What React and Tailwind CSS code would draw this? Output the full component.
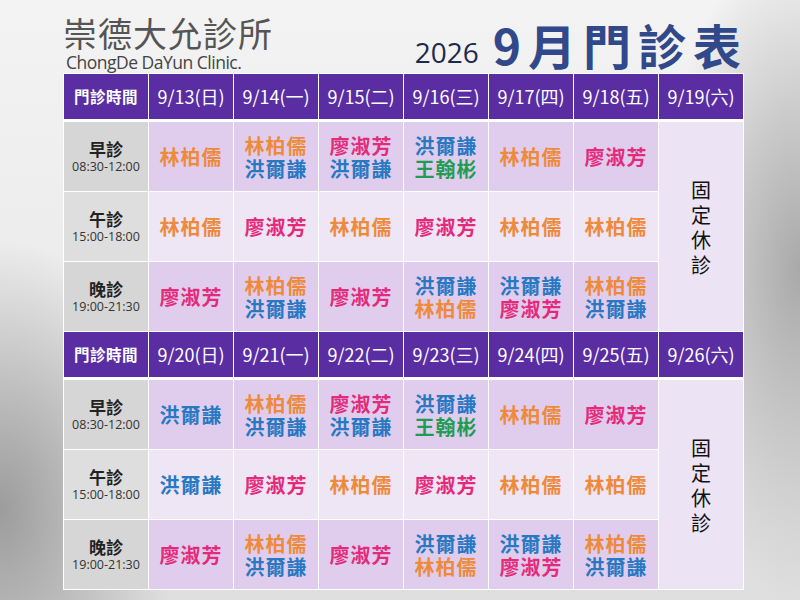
import React from 'react';

const LIN = { n: '林柏儒', c: 'text-[#ee8a3b]' };
const LIAO = { n: '廖淑芳', c: 'text-[#e42a7a]' };
const HONG = { n: '洪爾謙', c: 'text-[#2878c2]' };
const WANG = { n: '王翰彬', c: 'text-[#1f9c53]' };

const SESSIONS = [
  { name: '早診', time: '08:30-12:00' },
  { name: '午診', time: '15:00-18:00' },
  { name: '晚診', time: '19:00-21:30' },
];

const WEEKS = [
  {
    dates: ['9/13(日)', '9/14(一)', '9/15(二)', '9/16(三)', '9/17(四)', '9/18(五)', '9/19(六)'],
    rows: [
      [[LIN], [LIN, HONG], [LIAO, HONG], [HONG, WANG], [LIN], [LIAO]],
      [[LIN], [LIAO], [LIN], [LIAO], [LIN], [LIN]],
      [[LIAO], [LIN, HONG], [LIAO], [HONG, LIN], [HONG, LIAO], [LIN, HONG]],
    ],
  },
  {
    dates: ['9/20(日)', '9/21(一)', '9/22(二)', '9/23(三)', '9/24(四)', '9/25(五)', '9/26(六)'],
    rows: [
      [[HONG], [LIN, HONG], [LIAO, HONG], [HONG, WANG], [LIN], [LIAO]],
      [[HONG], [LIAO], [LIN], [LIAO], [LIN], [LIN]],
      [[LIAO], [LIN, HONG], [LIAO], [HONG, LIN], [HONG, LIAO], [LIN, HONG]],
    ],
  },
];

function HeaderRow({ dates }) {
  return (
    <div className="grid grid-cols-[repeat(8,84px)] gap-px h-[45px]">
      <div className="bg-[#5a2ea2] text-white flex items-center justify-center text-[15.5px] font-bold tracking-[0.5px]">
        門診時間
      </div>
      {dates.map((d) => (
        <div key={d} className="bg-[#5a2ea2] text-white flex items-center justify-center text-[18px]">
          {d}
        </div>
      ))}
    </div>
  );
}

function BodyRows({ rows }) {
  return (
    <div className="grid grid-cols-[repeat(8,84px)] grid-rows-[repeat(3,69px)] gap-px">
      {rows.map((row, ri) => {
        const odd = ri !== 1;
        return (
          <React.Fragment key={ri}>
            <div className={`flex flex-col items-center justify-center ${odd ? 'bg-[#d6d6d6]' : 'bg-[#dedede]'}`}>
              <div className="text-[17px] font-bold leading-[20px] text-[#222]">{SESSIONS[ri].name}</div>
              <div className="text-[12.5px] leading-[15px] text-[#333] font-['Open_Sans',sans-serif]">{SESSIONS[ri].time}</div>
            </div>
            {row.map((docs, ci) => (
              <div
                key={ci}
                className={`flex flex-col items-center justify-center text-[20px] leading-[23px] font-semibold tracking-[1px] ${odd ? 'bg-[#e0cdee]' : 'bg-[#eee5f5]'}`}
              >
                {docs.map((d) => (
                  <span key={d.n} className={d.c}>{d.n}</span>
                ))}
              </div>
            ))}
            {ri === 0 && (
              <div className="row-span-3 bg-[#ece3f4] flex flex-col items-center justify-center text-[20px] leading-[25px] text-[#111]">
                <span>固</span>
                <span>定</span>
                <span>休</span>
                <span>診</span>
              </div>
            )}
          </React.Fragment>
        );
      })}
    </div>
  );
}

export default function App() {
  return (
    <div className="w-[800px] h-[600px] overflow-hidden font-['Noto_Sans_CJK_TC',sans-serif] bg-[radial-gradient(ellipse_22%_45%_at_0%_85%,#9c9c9c_0%,rgba(156,156,156,0)_100%),radial-gradient(ellipse_18%_55%_at_100%_45%,#a9a9a9_0%,rgba(169,169,169,0)_100%),linear-gradient(180deg,#f3f3f3_0%,#eaeaea_60%,#dedede_100%)]">
      <div className="w-[681px] ml-[63px]">
        {/* Header */}
        <div className="flex items-end justify-between h-[73px]">
          <div className="pb-px">
            <div className="text-[34px] leading-[38px] text-[#555] tracking-[1px]">崇德大允診所</div>
            <div className="text-[17.5px] leading-[20px] text-[#444] font-['Open_Sans',sans-serif] tracking-[-0.5px] pl-[3px]">
              ChongDe DaYun Clinic.
            </div>
          </div>
          <div className="flex items-end gap-[14px] mr-[3px]">
            <span className="text-[28px] leading-[34px] text-[#1c2a4c] font-['Open_Sans',sans-serif] mb-[4px]">2026</span>
            <span className="text-[48px] leading-[58px] font-semibold text-[#31498a] tracking-[7px] -mr-[7px]">9月門診表</span>
          </div>
        </div>

        {/* Table */}
        <div className="bg-white p-px flex flex-col">
          {WEEKS.map((w, i) => (
            <div key={i} className={`flex flex-col gap-[3px] ${i > 0 ? 'mt-px' : ''}`}>
              <HeaderRow dates={w.dates} />
              <BodyRows rows={w.rows} />
            </div>
          ))}
        </div>
      </div>
    </div>
  );
}
